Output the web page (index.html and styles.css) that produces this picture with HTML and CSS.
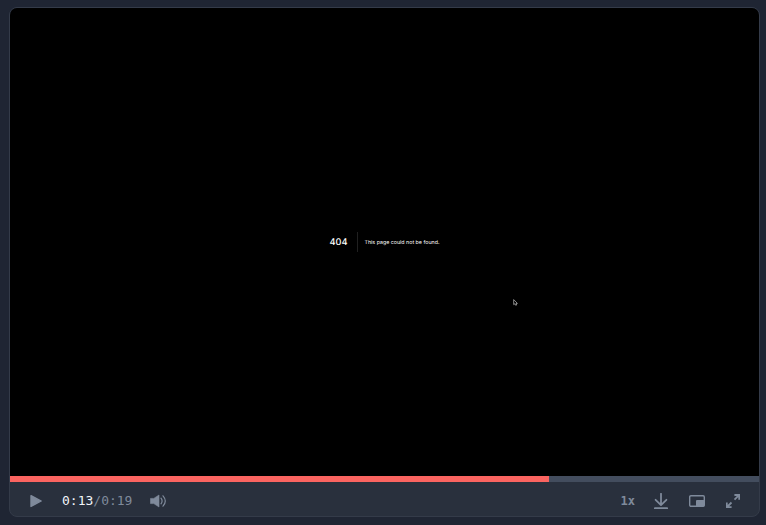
FILE: index.html
```html
<!DOCTYPE html>
<html lang="en">
<head>
<meta charset="utf-8">
<title>Video player</title>
<link rel="stylesheet" href="styles.css">
</head>
<body>
<main class="player">
  <div class="screen">
    <div class="error">
      <h1 class="code">404</h1>
      <p class="message">This page could not be found.</p>
    </div>
    <svg class="cursor" viewBox="0 0 5 7"><path d="M.7.6v5l1.3-.9.7 1.6 1-.4-.7-1.5h1.4z" fill="#000" stroke="#aaa" stroke-width=".8"/></svg>
  </div>
  <div class="progress"><div class="played"></div></div>
  <div class="controls">
    <svg class="icon play" viewBox="0 0 12 14"><path d="M1 1.6 11.2 7 1 12.4z" fill="currentColor" stroke="currentColor" stroke-width="1.4" stroke-linejoin="round"/></svg>
    <div class="time"><span class="current">0:13</span>/0:19</div>
    <svg class="icon volume" viewBox="0 0 17 14"><path d="M.5 4.4h3.3L9 1v12L3.8 9.6H.5z" fill="currentColor" stroke="currentColor" stroke-width=".6" stroke-linejoin="round"/><path d="M11 4.2q2.2 2.8 0 5.6M13 1.8q4.6 5.2 0 10.4" fill="none" stroke="currentColor" stroke-width="1.2" stroke-linecap="round"/></svg>
    <div class="actions">
      <span class="speed">1x</span>
      <svg class="icon download" viewBox="0 0 14 16"><path d="M7 .8v11M1.6 6.8 7 12.1l5.4-5.3M.8 15.2h12.4" fill="none" stroke="currentColor" stroke-width="1.8" stroke-linecap="round" stroke-linejoin="round"/></svg>
      <svg class="icon pip" viewBox="0 0 16 12"><rect x=".7" y=".7" width="14.6" height="10.6" rx="1.2" fill="none" stroke="currentColor" stroke-width="1.4"/><rect x="7" y="5" width="8.5" height="6.5" rx="1" fill="currentColor"/></svg>
      <svg class="icon expand" viewBox="0 0 14 14"><path d="M8.4 1h4.8v4.8M13 1.2 8.5 5.7M5.6 13.2H.8V8.4M1 13l4.5-4.5" fill="none" stroke="currentColor" stroke-width="1.8"/></svg>
    </div>
  </div>
</main>
</body>
</html>
```
FILE: styles.css
```css
* { box-sizing: border-box; }
body {
  margin: 0;
  padding: 7px 6px 8px 9px;
  height: 525px;
  overflow: hidden;
  background: #1f2533;
}
.player {
  display: flex;
  flex-direction: column;
  height: 510px;
  border: 1px solid #343b49;
  border-radius: 8px;
  overflow: hidden;
  background: #29303d;
}
.screen {
  position: relative;
  height: 468px;
  background: #000;
  display: flex;
  align-items: center;
  justify-content: center;
}
.error {
  display: flex;
  align-items: center;
  height: 20px;
  color: #fff;
  font-family: Inter, sans-serif;
  text-rendering: geometricPrecision;
}
.code {
  margin: 0;
  padding-right: 9px;
  border-right: 1px solid #202020;
  font-size: 9.2px;
  font-weight: 500;
  line-height: 22px;
  height: 20px;
}
.message {
  margin: 0 0 0 7px;
  font-size: 5.3px;
  line-height: 22px;
  height: 20px;
}
.cursor {
  position: absolute;
  left: 503px;
  top: 291px;
  width: 5px;
  height: 7px;
}
.progress { height: 6px; background: #434d5e; }
.played { width: 539px; height: 6px; background: #fa6460; }
.controls {
  flex: 1;
  display: flex;
  align-items: center;
  padding: 4px 19px 0 20px;
  color: #7f8a9b;
}
.icon { display: block; flex: none; }
.play { width: 12px; height: 14px; }
.time {
  margin-left: 20px;
  width: 70px;
  font: 13px/16px "DejaVu Sans Mono", monospace;
  white-space: nowrap;
}
.current { color: #f2f5fa; }
.volume { width: 17px; height: 14px; margin-left: 18px; }
.actions { display: flex; align-items: center; margin-left: auto; }
.speed {
  margin-right: 19px;
  font: bold 12px/16px "DejaVu Sans Mono", monospace;
}
.download { width: 14px; height: 16px; }
.pip { width: 16px; height: 12px; margin-left: 21px; }
.expand { width: 14px; height: 14px; margin-left: 21px; }
```
